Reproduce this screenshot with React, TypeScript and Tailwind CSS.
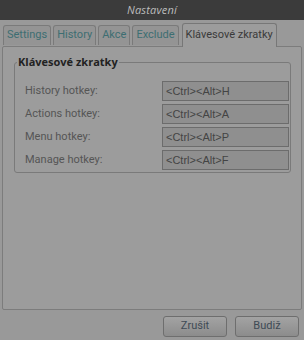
import React from "react";

const tabs = ["Settings", "History", "Akce", "Exclude"];
const rows = [
  ["History hotkey:", "<Ctrl><Alt>H"],
  ["Actions hotkey:", "<Ctrl><Alt>A"],
  ["Menu hotkey:", "<Ctrl><Alt>P"],
  ["Manage hotkey:", "<Ctrl><Alt>F"],
];

export default function App() {
  return (
    <div
      className="w-[304px] h-[340px] bg-[#999999] flex flex-col overflow-hidden"
      style={{ fontFamily: 'Roboto, "Noto Sans", sans-serif' }}
    >
      <div className="h-[20px] bg-[#3b3b3b] flex items-center justify-center">
        <span
          className="text-[11px] italic text-[#bdbdbd] tracking-[0.2px]"
          style={{ fontFamily: '"Open Sans", sans-serif' }}
        >
          Nastavení
        </span>
      </div>
      <div className="flex items-end h-[26px] pl-[3px] gap-[2px]">
        {tabs.map((t) => (
          <div
            key={t}
            className="h-[20px] px-[3px] mb-[1px] border border-[#7a7a7a] border-b-0 rounded-t-[3px] bg-[#949494] flex items-center text-[11px] text-[#3d6e72]"
          >
            {t}
          </div>
        ))}
        <div className="h-[24px] px-[3px] border border-[#777] border-b-0 rounded-t-[3px] bg-[#9c9c9c] flex items-start pt-[3px] text-[11px] text-[#3a3a3a] relative top-[1px] ml-[1px]">
          Klávesové zkratky
        </div>
      </div>
      <div className="mx-[2px] h-[264px] border border-[#7c7c7c] rounded-[2px] bg-[#9c9c9c] pl-[11px] pr-[10px] pt-[15px]">
        <div className="relative border border-[#7a7a7a] rounded-[3px] h-[111px] pt-[13px] pl-[10px] pr-[1px]">
          <div
            className="absolute -top-[9px] left-[2px] px-[1px] bg-[#9c9c9c] text-[11px] font-bold text-[#222] leading-[16px]"
            style={{ fontFamily: '"Open Sans", sans-serif' }}
          >
            Klávesové zkratky
          </div>
          <div className="flex flex-col gap-[3px] mt-[5px]">
            {rows.map(([l, v]) => (
              <div key={l} className="flex items-center h-[20px]">
                <div className="w-[137px] text-[11px] text-[#555]">{l}</div>
                <div
                  className="flex-1 h-[20px] bg-[#8f8f8f] border border-[#6c6c6c] flex items-center pl-[3px] text-[11px] text-[#444]"
                  style={{ fontFamily: '"Liberation Sans", Arial, sans-serif' }}
                >
                  {v}
                </div>
              </div>
            ))}
          </div>
        </div>
      </div>
      <div className="flex justify-end gap-[8px] pr-[5px] pt-[6px]">
        {["Zrušit", "Budiž"].map((b) => (
          <div
            key={b}
            className="w-[64px] h-[21px] rounded-[3px] border border-[#6e6e6e] bg-gradient-to-b from-[#a3a3a3] to-[#8c8c8c] flex items-center justify-center text-[11px] text-[#3e4a55]"
          >
            {b}
          </div>
        ))}
      </div>
    </div>
  );
}
